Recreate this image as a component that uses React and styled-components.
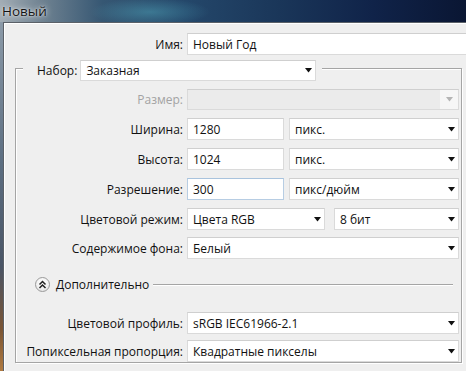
import React from 'react';
import styled, { createGlobalStyle } from 'styled-components';

const GlobalStyle = createGlobalStyle`
  html, body {
    margin: 0;
    padding: 0;
  }
  body {
    width: 466px;
    height: 371px;
    overflow: hidden;
    background: #0b1733;
    font-family: "Open Sans", "DejaVu Sans", sans-serif;
  }
`

const Window = styled.div`
  width: 466px;
  height: 371px;
  display: flex;
  flex-direction: column;
  overflow: hidden;
  background:
    radial-gradient(ellipse 60px 14px at 150px 12px, rgba(80, 170, 190, 0.45), transparent),
    linear-gradient(90deg, #a3adb5 0%, #6f8291 9%, #365773 22%, #24476a 40%, #1a3659 60%, #102349 80%, #0a1633 100%);
`

const TitleBar = styled.div`
  height: 22px;
  flex: none;
  display: flex;
  align-items: center;
  padding-left: 2px;
  font-size: 13.5px;
  color: #141414;
  text-shadow: 0 0 6px rgba(255, 255, 255, 0.9), 0 0 2px rgba(255, 255, 255, 0.8);
`

const Body = styled.div`
  flex: 1;
  display: flex;
  min-height: 0;
`

const Glass = styled.div`
  width: 3px;
  flex: none;
  background: linear-gradient(180deg, #8b9aa8 0%, #5d6f82 40%, #4a5566 70%, #7a5535 88%, #b07a40 100%);
`

const Panel = styled.div`
  flex: 1;
  min-width: 0;
  background: #efefef;
  border-left: 1px solid #5b6168;
  border-top: 1px solid #5b6168;
  box-shadow: inset 1px 1px 0 #ffffff;
  padding-top: 10px;
  display: flex;
  flex-direction: column;
`

const Row = styled.div`
  display: grid;
  grid-template-columns: ${p => p.$label}px 1fr;
  column-gap: 4px;
  align-items: center;
  height: ${p => p.$h || 22}px;
  margin-top: ${p => p.$top || 0}px;
`

const Label = styled.div`
  text-align: right;
  font-size: 12px;
  white-space: nowrap;
  color: ${p => (p.$disabled ? '#a3a3a3' : '#111')};
`

const Fields = styled.div`
  display: flex;
  align-items: center;
  gap: ${p => p.$gap || 0}px;
  height: 100%;
`

const Field = styled.div`
  box-sizing: border-box;
  width: ${p => p.$w}px;
  height: 100%;
  flex: none;
  display: flex;
  align-items: center;
  justify-content: space-between;
  padding: 0 3px 0 5px;
  font-size: 12px;
  color: #111;
  white-space: nowrap;
  background: ${p => (p.$disabled ? '#ebebeb' : '#ffffff')};
  border: 1px solid ${p => (p.$focus ? '#b7cde3' : '#dadada')};
  border-top-color: ${p => (p.$focus ? '#a9c3dd' : '#cfcfcf')};
`

const DisabledArrow = styled.div`
  width: 18px;
  height: 19px;
  margin-right: -3px;
  display: flex;
  align-items: center;
  justify-content: center;
  background: #f6f6f6;
`

const Group = styled.div`
  margin: 13px 4px 8px 11px;
  border: 1px solid #a5a5a5;
  box-shadow: inset 1px 1px 0 #ffffff, 1px 1px 0 #ffffff;
  display: flex;
  flex-direction: column;
  flex: 1;
`

const Legend = styled.div`
  align-self: flex-start;
  display: flex;
  align-items: center;
  gap: 3px;
  height: 21px;
  margin: -9px 0 0 7px;
  padding: 0 6px 0 14px;
  background: #efefef;
`

const Advanced = styled.div`
  display: flex;
  align-items: center;
  height: 16px;
  margin: 17px 8px 20px 19px;
  font-size: 12px;
  color: #111;
`

const RoundButton = styled.div`
  width: 15px;
  height: 15px;
  box-sizing: border-box;
  border-radius: 50%;
  border: 1px solid #9a9a9a;
  background: radial-gradient(circle at 50% 35%, #ffffff 0%, #f2f2f2 55%, #d8d8d8 100%);
  display: flex;
  align-items: center;
  justify-content: center;
  margin-right: 6px;
`

const Rule = styled.div`
  flex: 1;
  height: 1px;
  margin-left: 4px;
  background: #a5a5a5;
  box-shadow: 0 1px 0 #ffffff;
`

const Arrow = ({ disabled }) => (
  <svg width="7" height="5" viewBox="0 0 7 5">
    <polygon points="0,0 7,0 3.5,4.5" fill={disabled ? '#b4b4b4' : '#111'} />
  </svg>
)

const Select = ({ w, children }) => (
  <Field $w={w}>
    <span>{children}</span>
    <Arrow />
  </Field>
)

const Chevrons = () => (
  <svg width="9" height="9" viewBox="0 0 9 9">
    <polyline points="1.5,4.5 4.5,1.5 7.5,4.5" fill="none" stroke="#222" strokeWidth="1.5" />
    <polyline points="1.5,8 4.5,5 7.5,8" fill="none" stroke="#222" strokeWidth="1.5" />
  </svg>
)

export default function App() {
  return (
    <Window>
      <GlobalStyle />
      <TitleBar>Новый</TitleBar>
      <Body>
        <Glass />
        <Panel>
          <Row $label={179}>
            <Label>Имя:</Label>
            <Fields>
              <Field $w={300}>Новый Год</Field>
            </Fields>
          </Row>

          <Group>
            <Legend>
              <Label>Набор:</Label>
              <Select w={236}>Заказная</Select>
            </Legend>

            <Row $label={167} $top={8} $h={21}>
              <Label $disabled>Размер:</Label>
              <Fields>
                <Field $w={272} $disabled>
                  <span />
                  <DisabledArrow>
                    <Arrow disabled />
                  </DisabledArrow>
                </Field>
              </Fields>
            </Row>

            <Row $label={167} $top={8}>
              <Label>Ширина:</Label>
              <Fields $gap={5}>
                <Field $w={97}>1280</Field>
                <Select w={170}>пикс.</Select>
              </Fields>
            </Row>

            <Row $label={167} $top={8}>
              <Label>Высота:</Label>
              <Fields $gap={5}>
                <Field $w={97}>1024</Field>
                <Select w={170}>пикс.</Select>
              </Fields>
            </Row>

            <Row $label={167} $top={8}>
              <Label>Разрешение:</Label>
              <Fields $gap={5}>
                <Field $w={97} $focus>300</Field>
                <Select w={170}>пикс/дюйм</Select>
              </Fields>
            </Row>

            <Row $label={167} $top={8}>
              <Label>Цветовой режим:</Label>
              <Fields $gap={9}>
                <Select w={138}>Цвета RGB</Select>
                <Select w={125}>8 бит</Select>
              </Fields>
            </Row>

            <Row $label={167} $top={7}>
              <Label>Содержимое фона:</Label>
              <Fields>
                <Select w={272}>Белый</Select>
              </Fields>
            </Row>

            <Advanced>
              <RoundButton>
                <Chevrons />
              </RoundButton>
              Дополнительно
              <Rule />
            </Advanced>

            <Row $label={167}>
              <Label>Цветовой профиль:</Label>
              <Fields>
                <Select w={272}>sRGB IEC61966-2.1</Select>
              </Fields>
            </Row>

            <Row $label={167} $top={6}>
              <Label>Попиксельная пропорция:</Label>
              <Fields>
                <Select w={272}>Квадратные пикселы</Select>
              </Fields>
            </Row>
          </Group>
        </Panel>
      </Body>
    </Window>
  );
}
